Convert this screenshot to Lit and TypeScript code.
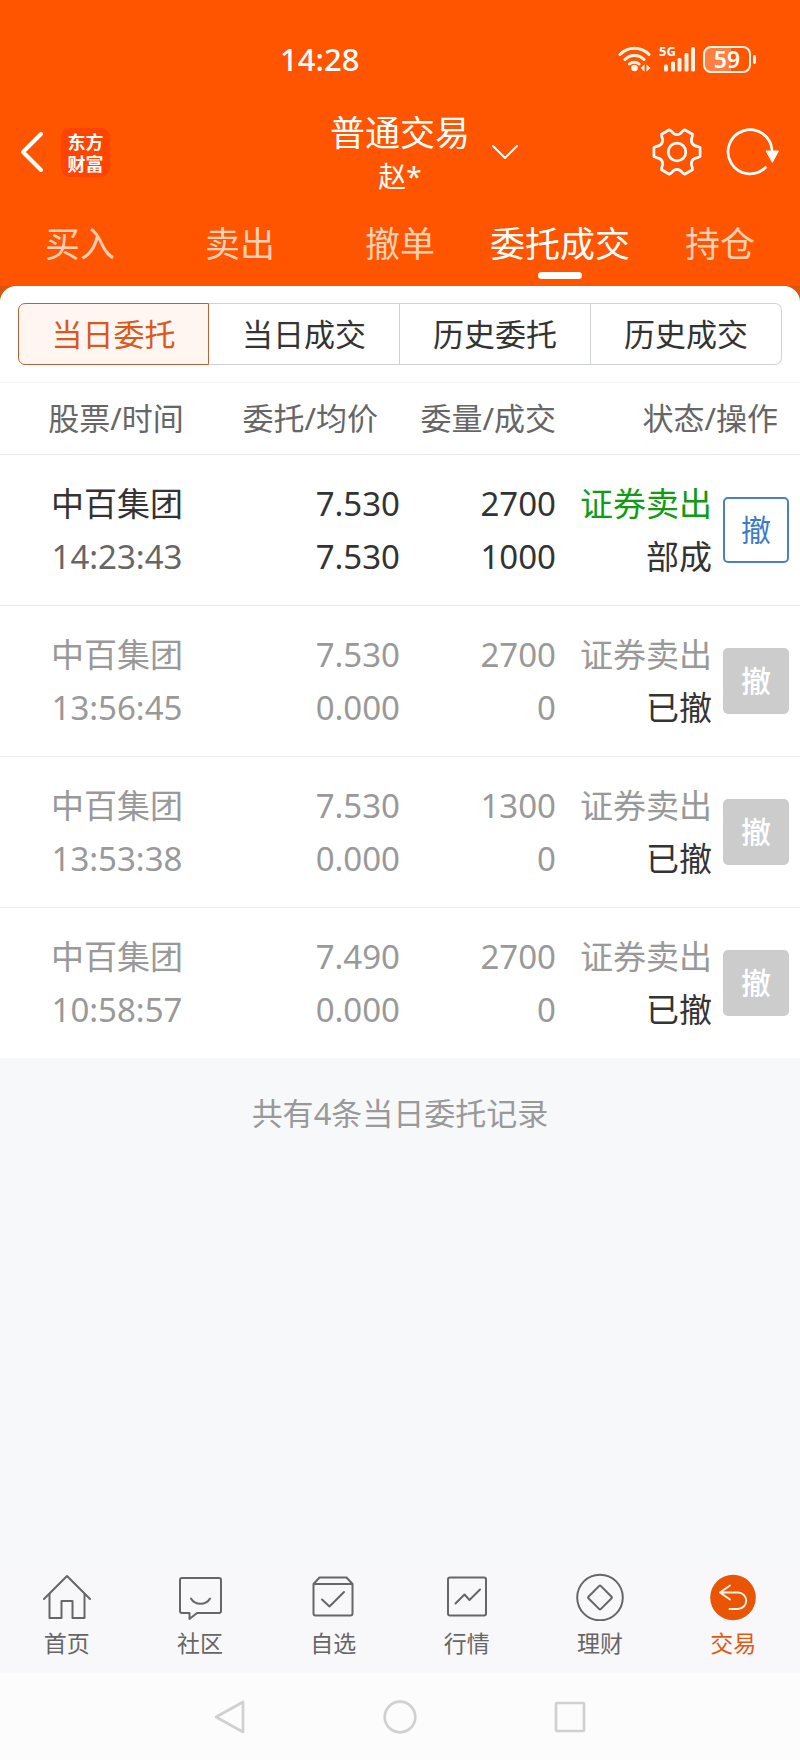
import { LitElement, html, css, svg } from "lit";
import { customElement, state } from "lit/decorators.js";
import { classMap } from "lit/directives/class-map.js";

interface Order {
  name: string;
  time: string;
  price: string;
  average: string;
  quantity: string;
  filled: string;
  side: string;
  status: string;
  open: boolean;
}

const ORDERS: Order[] = [
  { name: "中百集团", time: "14:23:43", price: "7.530", average: "7.530", quantity: "2700", filled: "1000", side: "证券卖出", status: "部成", open: true },
  { name: "中百集团", time: "13:56:45", price: "7.530", average: "0.000", quantity: "2700", filled: "0", side: "证券卖出", status: "已撤", open: false },
  { name: "中百集团", time: "13:53:38", price: "7.530", average: "0.000", quantity: "1300", filled: "0", side: "证券卖出", status: "已撤", open: false },
  { name: "中百集团", time: "10:58:57", price: "7.490", average: "0.000", quantity: "2700", filled: "0", side: "证券卖出", status: "已撤", open: false },
];

const SECTIONS = ["买入", "卖出", "撤单", "委托成交", "持仓"];
const RANGES = ["当日委托", "当日成交", "历史委托", "历史成交"];

/** Outline of a six-toothed gear centred on the origin. */
function gearOutline(): string {
  const at = (deg: number, r: number) => {
    const a = (deg * Math.PI) / 180;
    return `${(Math.cos(a) * r).toFixed(2)} ${(Math.sin(a) * r).toFixed(2)}`;
  };
  let d = `M${at(-11, 23.5)}`;
  for (let t = 0; t < 360; t += 60) {
    d += `L${at(t + 11, 23.5)}L${at(t + 15, 21.5)}C${at(t + 22, 16.5)} ${at(t + 38, 16.5)} ${at(t + 45, 21.5)}L${at(t + 49, 23.5)}`;
  }
  return d + "Z";
}

const TABS = [
  {
    label: "首页",
    icon: svg`<path d="M1 26 24 3l23 23"/><path d="M6.5 21v24h12V28h11v17h12V21"/>`,
  },
  {
    label: "社区",
    icon: svg`<path d="M6 5h37a2 2 0 0 1 2 2v31a2 2 0 0 1-2 2H21l-7.5 6V40H6a2 2 0 0 1-2-2V7a2 2 0 0 1 2-2Z"/><path d="M15 25.5c4 7 15 7 19 0"/>`,
  },
  {
    label: "自选",
    icon: svg`<path d="M4.5 11v29.5a2 2 0 0 0 2 2h35a2 2 0 0 0 2-2V11l-6-6.5h-27ZM4.5 11h39"/><path d="m13 26.5 7.5 7L35 19"/>`,
  },
  {
    label: "行情",
    icon: svg`<rect x="5" y="4.5" width="38" height="38" rx="2"/><path d="m12.5 30.5 9-9 5 5.500 10.500-10.500"/>`,
  },
  {
    label: "理财",
    icon: svg`<circle cx="24" cy="24.5" r="22.8"/><rect x="15.3" y="15.8" width="17.4" height="17.4" rx="1" transform="rotate(45 24 24.5)"/>`,
  },
  {
    label: "交易",
    icon: svg`<circle class="disc" cx="24" cy="24.5" r="22.8"/><path class="arrow" d="m21 12.5-10 7 10 7M11 19.5h18a8.2 8.2 0 0 1 0 16.4h-8.5"/>`,
  },
];

@customElement("status-bar")
class StatusBar extends LitElement {
  static styles = css`
    :host {
      display: flex;
      align-items: center;
      justify-content: space-between;
      height: 104px;
      padding: 7px 44px 0 280px;
      color: #fff;
    }
    svg {
      display: block;
      fill: #fff3e6;
    }
    .clock {
      font-size: 31px;
      font-weight: 500;
      line-height: 36px;
    }
    .signals {
      display: flex;
      align-items: center;
      gap: 8px;
    }
    .arc {
      fill: none;
      stroke: #fff3e6;
      stroke-width: 3;
      stroke-linecap: round;
    }
    .cell {
      position: relative;
    }
    .network {
      position: absolute;
      top: -4px;
      left: 0;
      font-size: 13px;
      font-weight: 700;
      line-height: 20px;
    }
    .battery {
      display: flex;
      align-items: center;
      gap: 2px;
    }
    .battery::after {
      content: "";
      width: 3px;
      height: 9px;
      border-radius: 2px;
      background: #fff3e6;
    }
    .charge {
      width: 44px;
      border: 2px solid #fff3e6;
      border-radius: 8px;
      background: linear-gradient(90deg, rgba(255, 255, 255, 0.25) 58%, transparent 58%);
      font-size: 23px;
      font-weight: 600;
      line-height: 23px;
      text-align: center;
    }
  `;

  render() {
    return html`
      <span class="clock">14:28</span>
      <div class="signals">
        <svg width="33" height="28" viewBox="0 0 33 28" role="img" aria-label="无线网络">
          <path class="arc" d="M2 9.5a20 20 0 0 1 29 0M7 14.5a13.5 13.5 0 0 1 19 0M11.5 19a7 7 0 0 1 9.5 0" />
          <circle cx="16.5" cy="23" r="3.3" />
          <path d="M26.5 19.5v7l-4-3.5ZM28.5 19.5v7l4-3.5Z" />
        </svg>
        <div class="cell">
          <span class="network">5G</span>
          <svg width="36" height="28" viewBox="0 0 36 28" aria-hidden="true">
            <rect x="5" y="19.5" width="4" height="7" rx="1.5" />
            <rect x="12" y="16.5" width="4" height="10" rx="1.5" />
            <rect x="18.5" y="13" width="4" height="13.5" rx="1.5" />
            <rect x="25.5" y="8" width="4" height="18.5" rx="1.5" />
            <rect x="32" y="2" width="4" height="24.500" rx="1.500" />
          </svg>
        </div>
        <div class="battery"><span class="charge">59</span></div>
      </div>
    `;
  }
}

@customElement("order-table")
class OrderTable extends LitElement {
  static styles = css`
    :host {
      display: block;
      background: #fff;
    }
    .orders {
      width: 100%;
      table-layout: fixed;
      border-collapse: collapse;
    }
    .stock-col {
      width: 29%;
    }
    .price-col {
      width: 21%;
    }
    .wide-col {
      width: 156px;
    }
    th,
    td {
      padding: 0;
      text-align: right;
      border-bottom: 1px solid #ebebeb;
      white-space: nowrap;
    }
    th {
      height: 69px;
      padding-bottom: 2px;
      border-top: 1px solid #f5f5f5;
      color: #666;
      font-size: 31px;
      font-weight: 400;
      line-height: 44px;
    }
    td {
      height: 150px;
      color: #333;
      font-size: 33px;
      line-height: 53px;
    }
    th.stock,
    td.stock {
      text-align: center;
    }
    td.stock {
      padding-left: 2px;
    }
    th.price {
      padding-right: 22px;
    }
    th.state {
      padding-right: 22px;
    }
    tr:last-child td {
      border-bottom: 0;
    }
    .value {
      display: block;
    }
    .time {
      color: #666;
    }
    .side {
      color: #129a12;
    }
    .closed .value {
      color: #999;
    }
    .closed .status {
      color: #333;
    }
    .cancel {
      display: block;
      width: 66px;
      height: 66px;
      margin: 0 0 0 auto;
      padding: 0;
      border: 2px solid #4a82bd;
      border-radius: 5px;
      background: #fff;
      color: #3b7cc9;
      font: inherit;
      font-size: 30px;
      line-height: 44px;
    }
    .cancel:disabled {
      border-color: #ccc;
      background: #ccc;
      color: #fff;
      font-weight: 500;
    }
    td.action {
      padding-right: 11px;
    }
  `;

  render() {
    return html`
      <table class="orders">
        <colgroup>
          <col class="stock-col" />
          <col class="price-col" />
          <col class="wide-col" />
          <col class="wide-col" />
          <col />
        </colgroup>
        <thead>
          <tr>
            <th class="stock" scope="col">股票/时间</th>
            <th class="price" scope="col">委托/均价</th>
            <th scope="col">委量/成交</th>
            <th class="state" scope="colgroup" colspan="2">状态/操作</th>
          </tr>
        </thead>
        <tbody>
          ${ORDERS.map(
            (o) => html`
              <tr class=${classMap({ closed: !o.open })}>
                <td class="stock"><span class="value">${o.name}</span><span class="value time">${o.time}</span></td>
                <td><span class="value">${o.price}</span><span class="value">${o.average}</span></td>
                <td><span class="value">${o.quantity}</span><span class="value">${o.filled}</span></td>
                <td><span class="value side">${o.side}</span><span class="value status">${o.status}</span></td>
                <td class="action"><button class="cancel" type="button" ?disabled=${!o.open}>撤</button></td>
              </tr>
            `
          )}
        </tbody>
      </table>
    `;
  }
}

@customElement("app-root")
class AppRoot extends LitElement {
  @state() private section = 3;
  @state() private range = 0;

  static styles = css`
    :host {
      display: flex;
      flex-direction: column;
      min-height: 100vh;
      background: #f7f8fa;
      font-family: "Noto Sans", "Noto Sans CJK SC", sans-serif;
    }
    button {
      margin: 0;
      padding: 0;
      border: 0;
      background: none;
      color: inherit;
      font: inherit;
    }
    svg {
      display: block;
      fill: none;
      stroke: currentColor;
      stroke-linecap: round;
      stroke-linejoin: round;
    }
    .top {
      background: #ff5500;
      color: #fff;
    }
    .title-bar {
      display: grid;
      grid-template-columns: 1fr auto 1fr;
      align-items: center;
      padding: 0 20px;
    }
    .leading,
    .trailing {
      display: flex;
      align-items: center;
      padding-bottom: 4px;
    }
    .leading {
      gap: 17px;
    }
    .trailing {
      justify-content: flex-end;
      gap: 24px;
    }
    .brand {
      display: flex;
      flex-direction: column;
      justify-content: center;
      width: 49px;
      height: 49px;
      border-radius: 9px;
      background: #ff4400;
      color: #fff;
      font-family: "Noto Sans CJK SC", sans-serif;
      font-size: 18px;
      font-weight: 700;
      line-height: 22px;
      text-align: center;
      text-decoration: none;
    }
    .account {
      display: grid;
      grid-template-columns: 26px auto 26px;
      align-items: center;
      gap: 22px;
    }
    .account-text {
      grid-column: 2;
    }
    .account-type {
      display: block;
      font-size: 35px;
      line-height: 44px;
    }
    .account-name {
      display: block;
      font-size: 28px;
      line-height: 42px;
    }
    .sections {
      display: grid;
      grid-template-columns: repeat(5, 1fr);
    }
    .section {
      display: flex;
      flex-direction: column;
      align-items: center;
      gap: 5px;
      padding: 24px 0 7px;
      color: #ffd0b3;
      font-size: 35px;
      line-height: 46px;
      white-space: nowrap;
    }
    .section::after {
      content: "";
      width: 44px;
      height: 7px;
      border-radius: 4px;
    }
    .section.current {
      color: #fff;
    }
    .section.current::after {
      background: #fff;
    }
    .sheet-edge {
      background: #dc5510;
    }
    .sheet {
      padding: 17px 18px;
      border-radius: 16px 16px 0 0;
      background: #fff;
    }
    .ranges {
      display: grid;
      grid-template-columns: repeat(4, 1fr);
    }
    .range {
      height: 62px;
      border: 1px solid #d0d3d6;
      border-left-width: 0;
      color: #333;
      font-size: 31px;
      line-height: 44px;
    }
    .range:first-child {
      border-left-width: 1px;
      border-radius: 7px 0 0 7px;
    }
    .range:last-child {
      border-radius: 0 7px 7px 0;
    }
    .range.current {
      border: 1px solid #b8643a;
      background: #fff5f1;
      color: #d8591a;
    }
    .summary {
      flex: 1;
      margin: 0;
      padding-top: 33px;
      color: #999;
      font-size: 31px;
      line-height: 44px;
      text-align: center;
    }
    .tabs {
      display: grid;
      grid-template-columns: repeat(6, 1fr);
      padding: 16px 0;
      background: #f8f8fb;
    }
    .tab {
      display: flex;
      flex-direction: column;
      align-items: center;
      gap: 8px;
      color: #666;
      font-size: 23px;
      line-height: 28px;
      text-decoration: none;
    }
    .tab svg {
      stroke-width: 2;
    }
    .tab.current {
      color: #e05a14;
    }
    .disc {
      fill: #e95504;
      stroke: none;
    }
    .arrow {
      stroke: #fff3e6;
    }
    .system {
      display: flex;
      justify-content: center;
      background: #fcfcfc;
      color: #d0d0d0;
    }
    .system-key {
      display: grid;
      place-items: center;
      width: 170px;
      height: 87px;
    }
  `;

  render() {
    return html`
      <header class="top">
        <status-bar></status-bar>
        <div class="title-bar">
          <div class="leading">
            <button type="button" aria-label="返回">
              <svg width="24" height="42" viewBox="0 0 24 42" stroke-width="4"><path d="M21 3 3 21l18 18" /></svg>
            </button>
            <a class="brand" href="#home"><span>东方</span><span>财富</span></a>
          </div>
          <button class="account" type="button">
            <span class="account-text">
              <span class="account-type">普通交易</span>
              <span class="account-name">赵*</span>
            </span>
            <svg width="26" height="20" viewBox="0 0 26 20" stroke-width="2"><path d="m1 2 12 12L25 2" /></svg>
          </button>
          <div class="trailing">
            <button type="button" aria-label="设置">
              <svg width="50" height="50" viewBox="-25 -25 50 50" stroke-width="2.7">
                <path d=${gearOutline()} /><circle r="8.8" />
              </svg>
            </button>
            <button type="button" aria-label="刷新">
              <svg width="54" height="50" viewBox="0 0 54 50" stroke-width="2.7">
                <path d="M46 23A22 22 0 1 0 39.500 40.500" />
                <path d="M40.500 24h12L46.500 35Z" fill="currentColor" stroke-width="1" />
              </svg>
            </button>
          </div>
        </div>
        <nav class="sections">
          ${SECTIONS.map(
            (label, i) => html`<button
              type="button"
              class=${classMap({ section: true, current: i === this.section })}
              @click=${() => (this.section = i)}
            >${label}</button>`
          )}
        </nav>
      </header>
      <div class="sheet-edge">
        <div class="sheet">
          <div class="ranges">
            ${RANGES.map(
              (label, i) => html`<button
                type="button"
                class=${classMap({ range: true, current: i === this.range })}
                @click=${() => (this.range = i)}
              >${label}</button>`
            )}
          </div>
        </div>
      </div>
      <order-table></order-table>
      <p class="summary">共有${ORDERS.length}条当日委托记录</p>
      <nav class="tabs">
        ${TABS.map(
          (tab, i) => html`<a class=${classMap({ tab: true, current: i === 5 })} href="#tab-${i}">
            <svg width="48" height="48" viewBox="0 0 48 48" aria-hidden="true">${tab.icon}</svg>
            <span>${tab.label}</span>
          </a>`
        )}
      </nav>
      <div class="system">
        <button class="system-key" type="button" aria-label="系统返回">
          <svg width="34" height="34" viewBox="0 0 34 34" stroke-width="2.7"><path d="M30 2v30L3 17Z" /></svg>
        </button>
        <button class="system-key" type="button" aria-label="主屏幕">
          <svg width="34" height="34" viewBox="0 0 34 34" stroke-width="2.7"><circle cx="17" cy="17" r="15.3" /></svg>
        </button>
        <button class="system-key" type="button" aria-label="最近任务">
          <svg width="34" height="34" viewBox="0 0 34 34" stroke-width="2.7"><rect x="3" y="3" width="28" height="28" rx="1" /></svg>
        </button>
      </div>
    `;
  }
}
